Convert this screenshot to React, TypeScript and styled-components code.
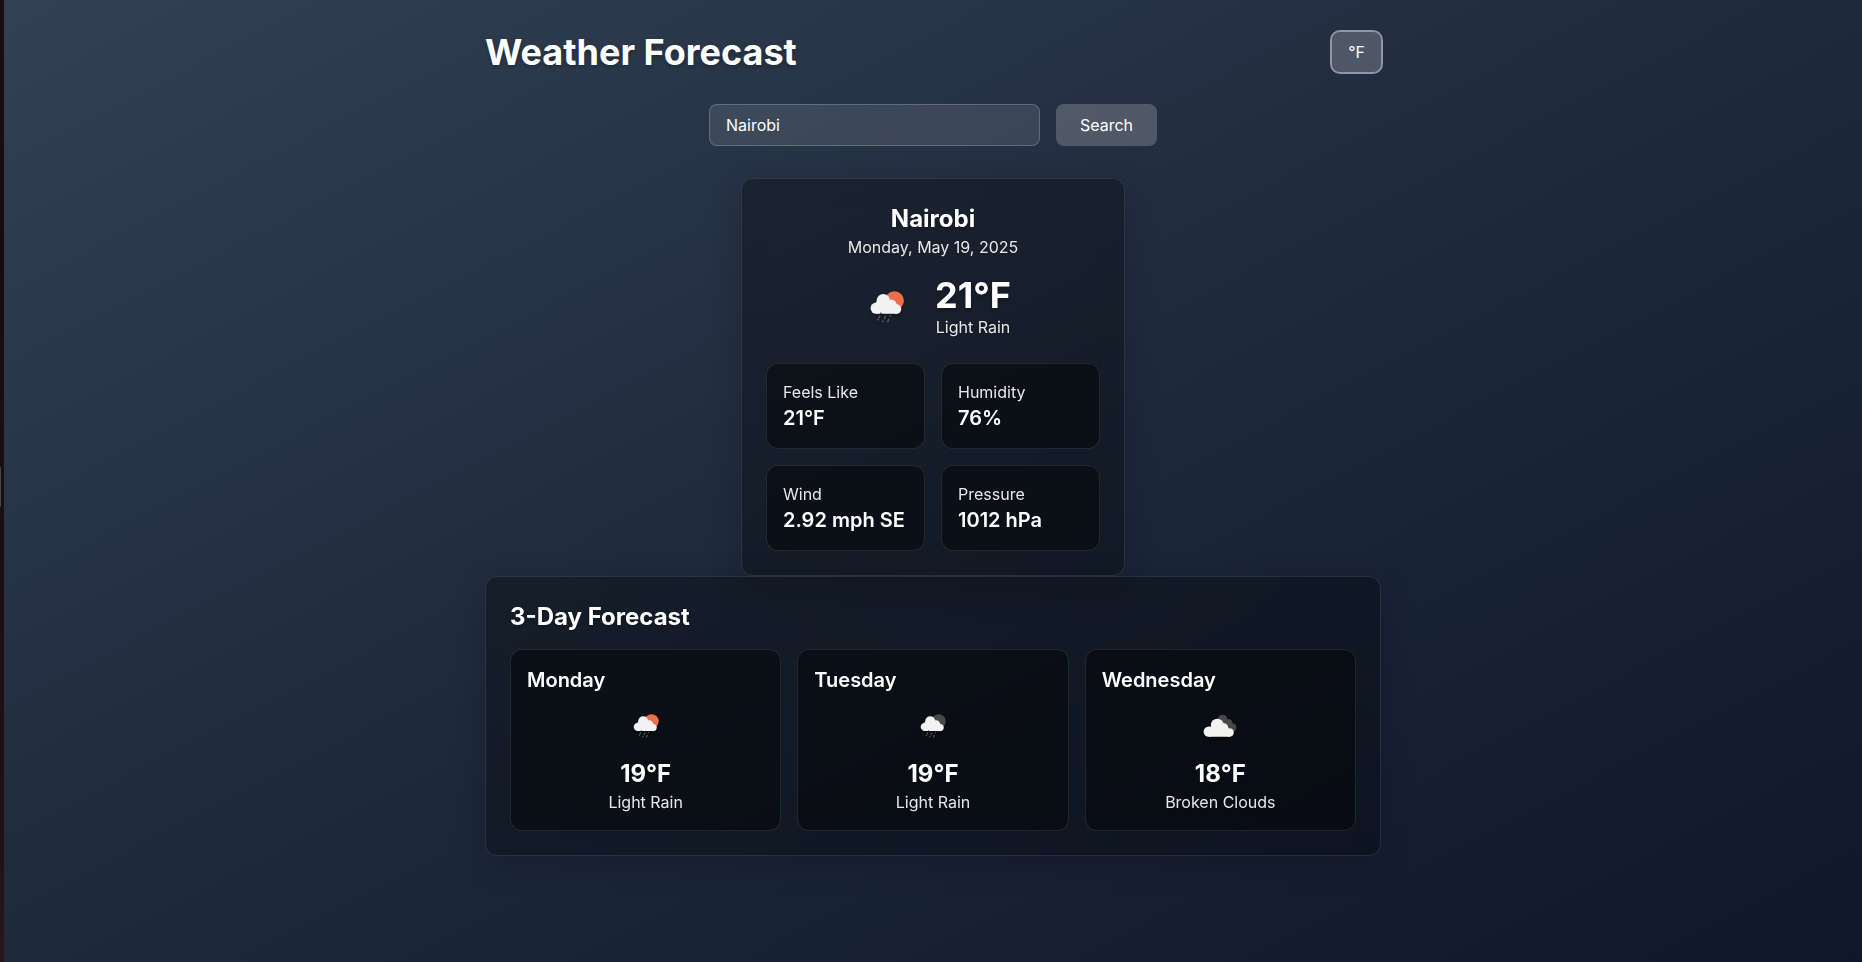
import React from "react";
import styled, { createGlobalStyle } from "styled-components";

const GlobalStyle = createGlobalStyle`
  *, *::before, *::after { box-sizing: border-box; margin: 0; }
  body {
    margin: 0;
    font-family: Inter, "Liberation Sans", sans-serif;
    font-size: 16px;
    line-height: 24px;
    color: #fff;
    background: #1e293b;
  }
`;

const Shell = styled.div`
  display: flex;
  height: 100vh;
  overflow: hidden;
`;

const EdgeStrip = styled.div`
  flex: 0 0 4px;
  display: flex;
  align-items: center;
  padding-top: 12px;
  background: linear-gradient(to bottom, #1a0d14 0%, #170b10 25%, #1c0e15 60%, #1f1016 85%, #29151e 100%);
`;

const EdgeHandle = styled.div`
  width: 1px;
  height: 40px;
  border-radius: 0 1px 1px 0;
  background: #4a4548;
`;

const Page = styled.main`
  flex: 1;
  padding: 32px;
  background: linear-gradient(to bottom right, #334155, #1e293b, #0f172a);
`;

const Container = styled.div`
  width: 896px;
  margin: 0 auto;
`;

const Header = styled.header`
  display: flex;
  justify-content: space-between;
  align-items: center;
  margin-bottom: 32px;
`;

const PageTitle = styled.h1`
  font-size: 36px;
  line-height: 40px;
  font-weight: 700;
  text-shadow: 0 2px 4px rgba(0, 0, 0, 0.3);
`;

const UnitButton = styled.button`
  padding: 8px 16px;
  border: 0;
  border-radius: 8px;
  font: inherit;
  color: #fff;
  background: rgba(255, 255, 255, 0.2);
  box-shadow: 0 0 0 2px rgba(255, 255, 255, 0.5);
`;

const SearchForm = styled.form`
  display: flex;
  gap: 16px;
  width: 448px;
  margin: 0 auto 32px;
`;

const SearchInput = styled.input`
  flex: 1;
  min-width: 0;
  height: 42px;
  padding: 8px 16px;
  border: 1px solid rgba(255, 255, 255, 0.2);
  border-radius: 8px;
  font: inherit;
  color: #fff;
  background: rgba(255, 255, 255, 0.1);
  outline: none;
`;

const SearchButton = styled.button`
  padding: 8px 24px;
  border: 0;
  border-radius: 8px;
  font: inherit;
  color: #fff;
  background: rgba(255, 255, 255, 0.2);
`;

const Card = styled.section<{ $width?: number }>`
  width: ${(p) => (p.$width ? `${p.$width}px` : "100%")};
  margin: 0 auto;
  padding: 24px;
  border: 1px solid rgba(255, 255, 255, 0.1);
  border-radius: 12px;
  background: rgba(0, 0, 0, 0.3);
  box-shadow: 0 8px 32px rgba(0, 0, 0, 0.2);
  backdrop-filter: blur(12px);
`;

const CardTitle = styled.h2`
  font-size: 24px;
  line-height: 32px;
  font-weight: 700;
  text-shadow: 0 2px 4px rgba(0, 0, 0, 0.3);
`;

const Place = styled.div`
  text-align: center;
  margin-bottom: 16px;
`;

const Muted = styled.p`
  color: rgba(255, 255, 255, 0.9);
  text-shadow: 0 1px 2px rgba(0, 0, 0, 0.3);
`;

const Current = styled.div`
  display: flex;
  justify-content: center;
  align-items: center;
  gap: 16px;
  margin-bottom: 24px;
`;

const Reading = styled.div`
  text-align: center;
`;

const Temperature = styled.p<{ $large?: boolean }>`
  font-size: ${(p) => (p.$large ? 36 : 24)}px;
  line-height: ${(p) => (p.$large ? 40 : 32)}px;
  font-weight: 700;
  text-shadow: 0 2px 4px rgba(0, 0, 0, 0.3);
`;

const Grid = styled.div<{ $columns: number }>`
  display: grid;
  grid-template-columns: repeat(${(p) => p.$columns}, minmax(0, 1fr));
  gap: 16px;
`;

const Tile = styled.div`
  padding: 16px;
  border: 1px solid rgba(255, 255, 255, 0.1);
  border-radius: 12px;
  background: rgba(0, 0, 0, 0.45);
`;

const TileStrong = styled.p`
  font-size: 20px;
  line-height: 28px;
  font-weight: 600;
`;

const ForecastTitle = styled(CardTitle)`
  margin-bottom: 16px;
`;

const DaySummary = styled.div`
  display: flex;
  flex-direction: column;
  align-items: center;
`;

const IconSvg = styled.svg<{ $spaced?: boolean }>`
  display: block;
  margin: ${(p) => (p.$spaced ? "8px 0" : "0")};
  filter: drop-shadow(0 2px 2px rgba(0, 0, 0, 0.3));
`;

type Sky = "rain-day" | "rain-night" | "clouds";

function WeatherIcon({ sky, size }: { sky: Sky; size: number }) {
  const spaced = size < 64;
  if (sky === "clouds") {
    return (
      <IconSvg $spaced={spaced} width={size} height={size} viewBox="0 0 64 64">
        <g fill="#484848">
          <circle cx="35.5" cy="23.2" r="6.2" />
          <circle cx="43" cy="28.4" r="5.7" />
          <circle cx="48.6" cy="34" r="5.2" />
          <rect x="33" y="26" width="14" height="12" />
        </g>
        <g fill="#f2f2f0">
          <circle cx="28.4" cy="30.8" r="8.6" />
          <circle cx="17" cy="39.4" r="6.9" />
          <circle cx="37" cy="34.6" r="6.2" />
          <circle cx="44.8" cy="40.7" r="5.6" />
          <path d="M17 33h23l5 4v9.3H17z" />
        </g>
      </IconSvg>
    );
  }
  return (
    <IconSvg $spaced={spaced} width={size} height={size} viewBox="-1.1 -0.7 64 64">
      <circle cx="38.3" cy="25" r="9.5" fill={sky === "rain-day" ? "#ec6e4c" : "#484848"} />
      <g fill="#f2f2f2">
        <circle cx="27.2" cy="25.2" r="6.8" />
        <circle cx="20.1" cy="32.5" r="5.6" />
        <circle cx="35" cy="29.3" r="5.5" />
        <circle cx="40.4" cy="33.4" r="4.8" />
        <path d="M20 26h17l4 3v9.1H20z" />
      </g>
      <circle cx="24.8" cy="37.7" r="0.8" fill="#303338" />
      <g stroke="#55575b" strokeWidth="1.5" strokeLinecap="round">
        <path d="M23.7 40.4l-.6 1.2M22.4 43.2l-.5 1M29.3 40.6l-1.1 2.3M26.9 45.2l-.3.6M34.4 39.8l-.2.4M32.6 43.7l-1 2.2" />
      </g>
    </IconSvg>
  );
}

const details = [
  { label: "Feels Like", value: "21°F" },
  { label: "Humidity", value: "76%" },
  { label: "Wind", value: "2.92 mph SE" },
  { label: "Pressure", value: "1012 hPa" },
];

const days: { name: string; sky: Sky; temp: string; summary: string }[] = [
  { name: "Monday", sky: "rain-day", temp: "19°F", summary: "Light Rain" },
  { name: "Tuesday", sky: "rain-night", temp: "19°F", summary: "Light Rain" },
  { name: "Wednesday", sky: "clouds", temp: "18°F", summary: "Broken Clouds" },
];

export default function App() {
  return (
    <Shell>
      <GlobalStyle />
      <EdgeStrip>
        <EdgeHandle />
      </EdgeStrip>
      <Page>
        <Container>
          <Header>
            <PageTitle>Weather Forecast</PageTitle>
            <UnitButton type="button">°F</UnitButton>
          </Header>
          <SearchForm onSubmit={(e) => e.preventDefault()}>
            <SearchInput defaultValue="Nairobi" aria-label="City" />
            <SearchButton type="submit">Search</SearchButton>
          </SearchForm>
          <Card $width={384}>
            <Place>
              <CardTitle>Nairobi</CardTitle>
              <Muted>Monday, May 19, 2025</Muted>
            </Place>
            <Current>
              <WeatherIcon sky="rain-day" size={64} />
              <Reading>
                <Temperature $large>21°F</Temperature>
                <Muted>Light Rain</Muted>
              </Reading>
            </Current>
            <Grid $columns={2}>
              {details.map((d) => (
                <Tile key={d.label}>
                  <Muted>{d.label}</Muted>
                  <TileStrong>{d.value}</TileStrong>
                </Tile>
              ))}
            </Grid>
          </Card>
          <Card>
            <ForecastTitle>3-Day Forecast</ForecastTitle>
            <Grid $columns={3}>
              {days.map((d) => (
                <Tile key={d.name}>
                  <TileStrong>{d.name}</TileStrong>
                  <DaySummary>
                    <WeatherIcon sky={d.sky} size={48} />
                    <Temperature>{d.temp}</Temperature>
                    <Muted>{d.summary}</Muted>
                  </DaySummary>
                </Tile>
              ))}
            </Grid>
          </Card>
        </Container>
      </Page>
    </Shell>
  );
}
